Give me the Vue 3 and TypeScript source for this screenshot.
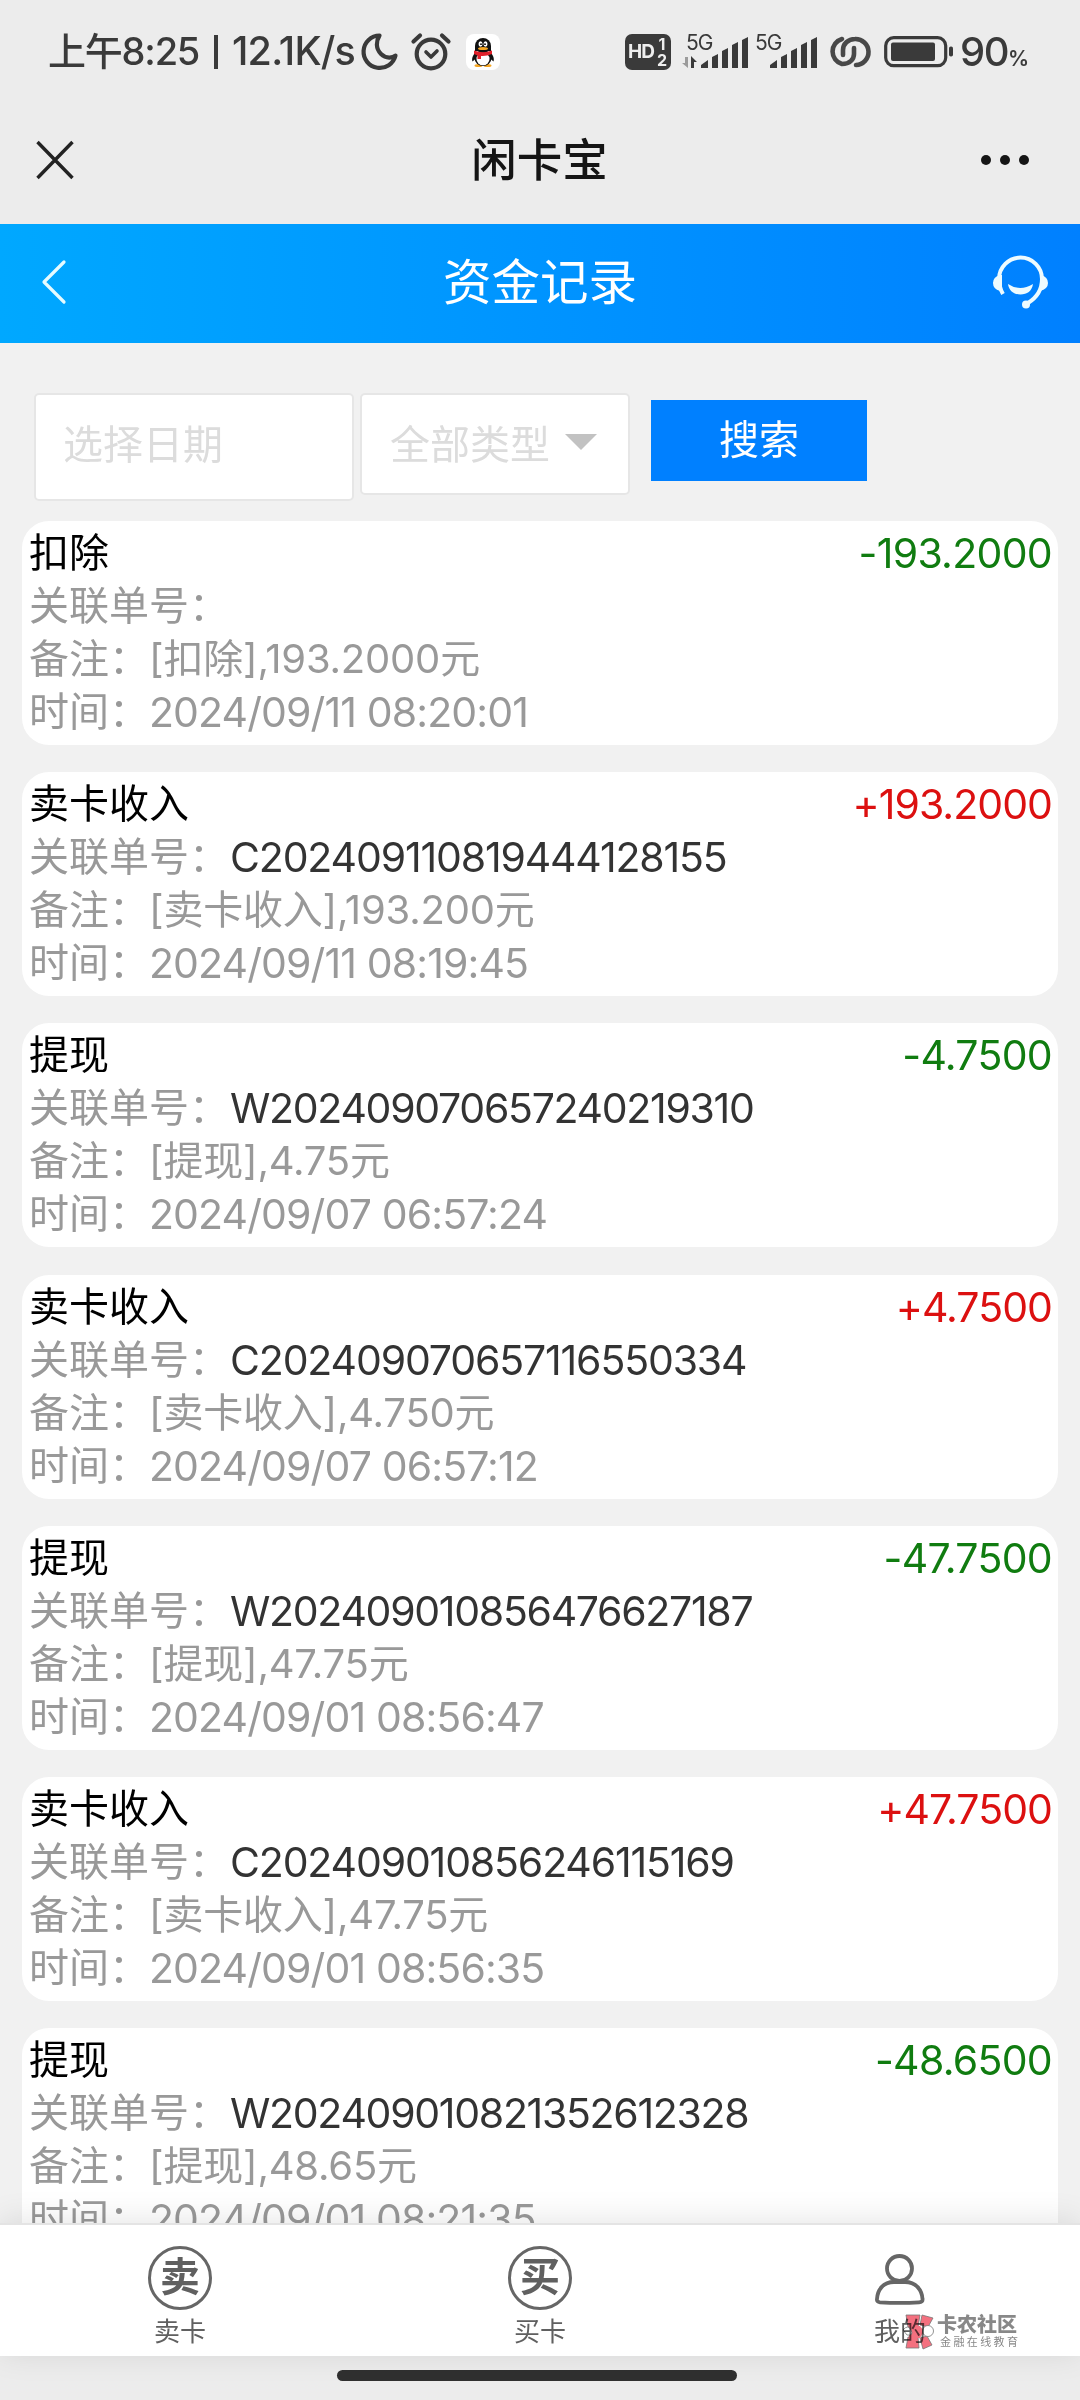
<script setup lang="ts">
interface RecordItem {
  title: string
  amount: string
  order: string
  note: string
  time: string
}

const records: RecordItem[] = [
  { title: '扣除', amount: '-193.2000', order: '', note: '[扣除],193.2000元', time: '2024/09/11 08:20:01' },
  { title: '卖卡收入', amount: '+193.2000', order: 'C202409110819444128155', note: '[卖卡收入],193.200元', time: '2024/09/11 08:19:45' },
  { title: '提现', amount: '-4.7500', order: 'W202409070657240219310', note: '[提现],4.75元', time: '2024/09/07 06:57:24' },
  { title: '卖卡收入', amount: '+4.7500', order: 'C202409070657116550334', note: '[卖卡收入],4.750元', time: '2024/09/07 06:57:12' },
  { title: '提现', amount: '-47.7500', order: 'W202409010856476627187', note: '[提现],47.75元', time: '2024/09/01 08:56:47' },
  { title: '卖卡收入', amount: '+47.7500', order: 'C202409010856246115169', note: '[卖卡收入],47.75元', time: '2024/09/01 08:56:35' },
  { title: '提现', amount: '-48.6500', order: 'W202409010821352612328', note: '[提现],48.65元', time: '2024/09/01 08:21:35' },
]
</script>

<template>
  <div class="screen">
    <div class="status">
      <span class="clock">上午8:25</span>
      <span class="bar"></span>
      <span class="speed">12.1K/s</span>
      <svg class="moon" viewBox="0 0 36 38" width="36" height="38"><path d="M17.500 2.500A16.200 16.200 0 1 0 33.500 22.500C31 25 24 26 19 21C13.500 15.500 14 8 17.500 2.500Z" fill="none" stroke="#3a3a3a" stroke-width="4.200" stroke-linejoin="round" /></svg>
      <svg class="alarm" viewBox="0 0 40 38" width="40" height="38" fill="none" stroke="#3a3a3a" stroke-linecap="round" stroke-linejoin="round"><circle cx="20" cy="21" r="14.300" stroke-width="4.200" /><path d="M15 19l5 5 6-6" stroke-width="3.600" /><path d="M2.500 8.500l6.500-6M37.500 8.500l-6.500-6" stroke-width="4.200" /></svg>
      <svg class="qq" viewBox="0 0 34 36" width="34" height="36">
        <rect x="0" y="0" width="34" height="36" rx="8" fill="#fff" />
        <ellipse cx="12.500" cy="31.500" rx="4" ry="1.600" fill="#f5a623" /><ellipse cx="21.500" cy="31.500" rx="4" ry="1.600" fill="#f5a623" />
        <path d="M10 18C6.500 21 5.500 25 6.500 27.500L10 24.500M24 18C27.500 21 28.500 25 27.500 27.500L24 24.500" fill="#111" />
        <ellipse cx="17" cy="24" rx="8.500" ry="8" fill="#111" /><ellipse cx="17" cy="25" rx="6.500" ry="6.300" fill="#fff" />
        <path d="M9 17V12a8 8 0 0 1 16 0v5z" fill="#111" />
        <ellipse cx="14.500" cy="10" rx="2" ry="2.700" fill="#fff" /><ellipse cx="19.500" cy="10" rx="2" ry="2.700" fill="#fff" /><circle cx="15" cy="10.200" r=".9" /><circle cx="19" cy="10.200" r=".9" />
        <ellipse cx="17" cy="14.500" rx="5" ry="1.600" fill="#f5a623" />
        <path d="M8 16.500Q17 20 26 16.500V20Q20 22.500 15 22V25H11.500V21.500L8 20Z" fill="#e0202a" />
      </svg>
      <span class="spacer"></span>
      <div class="hd"><span>HD</span><span class="sim"><i>1</i><i>2</i></span></div>
      <div class="signal first">
        <span class="net">5G</span>
        <svg viewBox="0 0 68 38" width="68" height="38" fill="#3a3a3a">
          <path d="M6 24v11L0 30h3v-6z" fill="#9b9b9b" /><path d="M9 23l6 6h-3v6H9z" />
          <path d="M19 35v-3l7-5v8zM30 35v-11l6-3v14zM40 35V18l6-3v20zM50 35V12l6-3v26zM60 35V7l6-3v31z" />
        </svg>
      </div>
      <div class="signal second">
        <span class="net">5G</span>
        <svg viewBox="0 0 68 38" width="68" height="38" fill="#3a3a3a">
          <path d="M19 35v-3l7-5v8zM30 35v-11l6-3v14zM40 35V18l6-3v20zM50 35V12l6-3v26zM60 35V7l6-3v31z" />
        </svg>
      </div>
      <svg class="link" viewBox="0 0 42 32" width="42" height="32" fill="none" stroke="#484848" stroke-width="4.600" stroke-linecap="round"><path d="M14 3A13 13 0 0 0 14 28C22 28 26 23 26 18V12" /><path d="M28 29A13 13 0 0 0 27 3C20 3 15 8 15 14V19" /></svg>
      <svg class="battery" viewBox="0 0 70 32" width="70" height="32"><rect x="1.700" y="1.700" width="60" height="28" rx="8" fill="none" stroke="#3a3a3a" stroke-width="3.200" /><rect x="7" y="6.500" width="44" height="18.500" rx="2" fill="#3a3a3a" /><rect x="65" y="10.500" width="4" height="10" rx="1.800" fill="#3a3a3a" /></svg>
      <span class="percent">90<small>%</small></span>
    </div>

    <div class="titlebar">
      <svg viewBox="0 0 38 40" width="38" height="40"><path d="M1.500 2l35 36M36.500 2l-35 36" stroke="#222" stroke-width="3.400" fill="none" /></svg>
      <span class="app-name">闲卡宝</span>
      <svg viewBox="0 0 50 12" width="50" height="12" fill="#151515"><circle cx="6" cy="6" r="5" /><circle cx="25" cy="6" r="5" /><circle cx="44" cy="6" r="5" /></svg>
    </div>

    <header class="header">
      <svg viewBox="0 0 26 46" width="26" height="46"><path d="M23 3L3 23l20 20" fill="none" stroke="#e6fbff" stroke-width="3.200" stroke-linecap="round" stroke-linejoin="round" /></svg>
      <h1>资金记录</h1>
      <svg viewBox="0 0 58 54" width="58" height="54" fill="none" stroke="#edfbff"><path d="M11 39C8 34 7 29 7 24A21.500 21.500 0 0 1 50 24C50 35 44 43 36 48" stroke-width="4" /><path d="M8 20Q1 22 1 28t7 8l2 1V20zM49 20q7 2 7 8t-8 8z" fill="#edfbff" stroke="none" /><circle cx="34" cy="49.500" r="4" fill="#edfbff" stroke="none" /><path d="M16 29Q28 37 41 29C40 36 35 39.500 28.500 39.500S17 36 16 29z" fill="#edfbff" stroke="none" /></svg>
    </header>

    <main class="content">
      <form class="filters">
        <div class="field date">选择日期</div>
        <div class="field kind">全部类型<span class="caret"></span></div>
        <div class="search">搜索</div>
      </form>
      <section v-for="r in records" :key="r.time" class="card">
        <div class="row head"><span>{{ r.title }}</span><span class="amount" :class="{ plus: r.amount[0] === '+' }">{{ r.amount }}</span></div>
        <div class="row">关联单号：<b :class="{ withdraw: r.order[0] === 'W' }">{{ r.order }}</b></div>
        <div class="row">备注：<span class="note">{{ r.note }}</span></div>
        <div class="row">时间：<span class="time">{{ r.time }}</span></div>
      </section>
    </main>

    <nav class="tabs">
      <div class="tab"><span class="round">卖</span><span>卖卡</span></div>
      <div class="tab"><span class="round">买</span><span>买卡</span></div>
      <div class="tab">
        <svg class="person" viewBox="0 0 50 64" width="50" height="64" fill="none" stroke="#666" stroke-width="3.800"><circle cx="24.500" cy="22.500" r="12.500" /><path d="M19 36h11C41 36 47 44 47.500 53Q48 56 44 56.300Q25 57.500 5 56.300Q1.500 56 2 53C2.500 44 8 36 19 36z" /></svg>
        <span>我的</span>
      </div>
      <div class="mark">
        <svg viewBox="0 0 32 36" width="32" height="36" stroke="#777" stroke-width=".8"><g fill="#f4707f"><path d="M4 1h14l-2 12H6zM20 1l11 3-5 9-8-2zM6 23h10l1 11H4zM18 24l7-2 5 9-9 4z" /><path d="M7 12h11l4 5-4 7H7z" stroke="none" /></g><circle cx="26" cy="17" r="5.500" fill="#fff" /><path d="M1 16q5-6 8 0t-4 5z" fill="#fff" /></svg>
        <div class="mark-text"><strong>卡农社区</strong><em>金融在线教育</em></div>
      </div>
    </nav>
    <div class="gesture"><span></span></div>
  </div>
</template>

<style>
body { margin: 0; background: #ececec; }
</style>

<style scoped>
* { box-sizing: border-box; }
.screen { width: 1080px; height: 2400px; overflow: hidden; display: flex; flex-direction: column; background: #f1f1f1; font-family: Inter, "Noto Sans CJK SC", sans-serif; color: #000; }
svg { display: block; flex: none; overflow: visible; }
.status { height: 100px; flex: none; display: flex; align-items: center; padding: 3px 53px 0 48px; background: #ececec; color: #3a3a3a; font-size: 38px; white-space: nowrap; }
.clock { width: 152px; letter-spacing: -1.200px; font-size: 38px; font-weight: 450; padding-bottom: 6px; }
.bar { width: 4px; height: 34px; background: #3a3a3a; margin: 0 0 0 14px; }
.speed { width: 125px; margin-left: 14px; font-size: 39.500px; font-weight: 450; letter-spacing: -0.800px; padding-bottom: 1px; }
.moon { margin-left: 5px; }
.alarm { margin-left: 13px; }
.qq { margin-left: 15px; }
.spacer { flex: 1; }
.hd { width: 46px; height: 36px; background: #3a3a3a; color: #eee; border-radius: 7px; font-size: 19px; font-weight: 700; letter-spacing: -1px; display: flex; align-items: center; padding-left: 3px; }
.sim { display: flex; flex-direction: column; font-size: 16px; line-height: 16px; margin-left: 2px; }
.sim i { font-style: normal; width: 11px; text-align: center; }
.signal { position: relative; width: 68px; height: 38px; flex: none; }
.signal.first { margin-left: 11px; }
.signal.second { margin-left: 1px; }
.net { position: absolute; left: 4px; top: -3px; font-size: 21px; line-height: 26px; letter-spacing: -1px; }
.link { margin-left: 9px; }
.battery { margin-left: 14px; }
.percent { margin-left: 6px; width: 67px; font-size: 40px; font-weight: 450; letter-spacing: -1.500px; }
.percent small { font-size: 21px; font-weight: 600; }
.titlebar { height: 124px; flex: none; display: flex; align-items: center; justify-content: space-between; padding: 0 50px 5px 36px; background: #ececec; }
.app-name { font-size: 45.500px; font-weight: 500; color: #151515; padding: 0 0 5px 25px; }
.header { height: 119px; flex: none; display: flex; align-items: center; justify-content: space-between; padding: 0 30px 3px 41px; background: linear-gradient(90deg, #00a8ff, #0080ff); }
h1 { margin: 1px 0 0 21px; font-size: 48.500px; font-weight: 400; line-height: 60px; color: #fff; }
.content { flex: 1; min-height: 0; overflow: hidden; padding: 50px 22px 0; }
.filters { display: flex; align-items: flex-start; height: 128px; padding-left: 12px; }
.field { background: #fff; border: 2px solid #e6e6e6; border-radius: 5px; color: #dcdcdc; font-size: 40px; }
.date { width: 320px; height: 108px; padding: 20px 27px; line-height: 60px; }
.kind { width: 270px; height: 102px; padding: 0 28px 4px; margin-left: 6px; display: flex; align-items: center; }
.caret { border: 16px solid transparent; border-top-color: #c2c2c2; border-bottom: 0; margin-left: 15px; }
.search { width: 216px; height: 81px; margin: 7px 0 0 21px; background: #0080ff; color: #fff; font-size: 40px; line-height: 79px; text-align: center; }
.card { height: 224px; margin-bottom: 27.200px; padding: 5px 7px; border-radius: 27px; background: #fff; }
.row { display: flex; height: 53px; line-height: 53px; font-size: 40px; color: #999; white-space: nowrap; }
.row b { color: #333; font-weight: 400; font-size: 41px; letter-spacing: -1.150px; margin-left: 1px; padding-top: 1px; }
.row b.withdraw { letter-spacing: -1.300px; }
.note { letter-spacing: -0.200px; }
.time { font-size: 41px; letter-spacing: -0.880px; padding-top: 1px; }
.head { justify-content: space-between; color: #000; }
.amount { color: #107c10; font-size: 41px; letter-spacing: -0.700px; margin-right: -1px; padding-top: 1px; }
.amount.plus { color: #dc1010; letter-spacing: -0.950px; }
.tabs { position: relative; height: 133px; flex: none; display: flex; background: #fff; border-top: 2px solid #e4e4e4; box-shadow: 0 -3px 30px rgba(0, 0, 0, .1); padding-top: 21px; }
.tab { flex: 1; display: flex; flex-direction: column; align-items: center; font-size: 26px; line-height: 40px; color: #606060; }
.round { width: 64px; height: 64px; border: 3px solid #666; border-radius: 50%; font-size: 40px; font-weight: 700; line-height: 55px; text-align: center; margin-bottom: 2px; }
.person { margin-bottom: 2px; }
.mark { position: absolute; left: 902px; top: 89px; display: flex; mix-blend-mode: multiply; }
.mark-text { display: flex; flex-direction: column; margin-left: 3px; color: #888; }
.mark-text strong { font-size: 20px; line-height: 22px; font-weight: 900; }
.mark-text em { font-style: normal; font-size: 11px; line-height: 12px; letter-spacing: 2.400px; margin-left: 3px; }
.gesture { height: 44px; flex: none; background: #ececec; display: flex; justify-content: center; padding: 14px 6px 0 0; }
.gesture span { width: 400px; height: 11px; border-radius: 6px; background: #303030; }
</style>
